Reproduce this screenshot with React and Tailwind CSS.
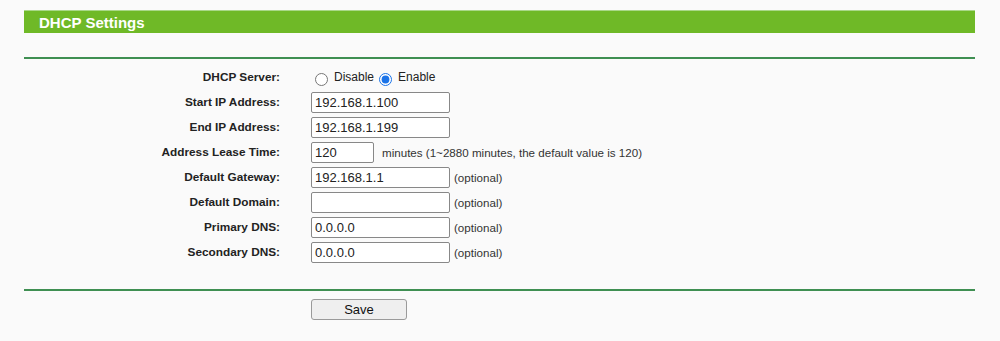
import React from 'react';

const rows = [
  { label: 'Start IP Address:', value: '192.168.1.100' },
  { label: 'End IP Address:', value: '192.168.1.199' },
  { label: 'Address Lease Time:', value: '120', short: true, note: 'minutes (1~2880 minutes, the default value is 120)' },
  { label: 'Default Gateway:', value: '192.168.1.1', note: '(optional)' },
  { label: 'Default Domain:', value: '', note: '(optional)' },
  { label: 'Primary DNS:', value: '0.0.0.0', note: '(optional)' },
  { label: 'Secondary DNS:', value: '0.0.0.0', note: '(optional)' },
];

const Label = ({ children }) => (
  <div className="w-[256px] text-right text-[11.8px] font-bold text-[#222]">{children}</div>
);

const App = () => {
  return (
    <div className="min-h-[341px] bg-[#fafafa] font-['Liberation_Sans',Arial,sans-serif] text-[#222] pt-[10px]">
      <div className="mx-[24px] w-[951px]">
        {/* Title bar */}
        <div className="h-[23px] bg-[#6fb927] border-t border-[#a9d888] flex items-center pl-[15px]">
          <h1 className="text-[15px] font-bold text-white leading-none">DHCP Settings</h1>
        </div>

        <div className="mt-[24px] h-[2px] bg-[#3f8f52]"></div>

        {/* Form */}
        <div className="pt-[6px] flex flex-col">
          <div className="h-[25px] flex items-center">
            <Label>DHCP Server:</Label>
            <div className="ml-[31px] flex items-center text-[12px] pt-[1px]">
              <input type="radio" name="dhcp" className="w-[13px] h-[13px] m-0 ml-[4px] mt-[3px] accent-[#1a73e8]" />
              <span className="ml-[6px] mb-[2px]">Disable</span>
              <input type="radio" name="dhcp" defaultChecked className="w-[13px] h-[13px] m-0 ml-[5px] mt-[3px] accent-[#1a73e8]" />
              <span className="ml-[6px] mb-[2px]">Enable</span>
            </div>
          </div>

          {rows.map((r) => (
            <div key={r.label} className="h-[25px] flex items-center">
              <Label>{r.label}</Label>
              <input
                type="text"
                defaultValue={r.value}
                className={`ml-[31px] h-[21px] ${r.short ? 'w-[63px]' : 'w-[139px]'} bg-white border border-[#888] rounded-[2px] px-[3px] text-[13px] text-[#222] outline-none`}
              />
              {r.note && (
                <span className={`${r.short ? 'ml-[8px]' : 'ml-[4px]'} text-[11.6px] text-[#333]`}>{r.note}</span>
              )}
            </div>
          ))}
        </div>

        <div className="mt-[24px] h-[2px] bg-[#3f8f52]"></div>

        <div className="mt-[6px] pl-[287px]">
          <button className="w-[96px] h-[21px] bg-[#efefef] border border-[#9a9a9a] rounded-[3px] text-[13px] text-[#111] leading-none">
            Save
          </button>
        </div>
      </div>
    </div>
  );
};

export default App;
